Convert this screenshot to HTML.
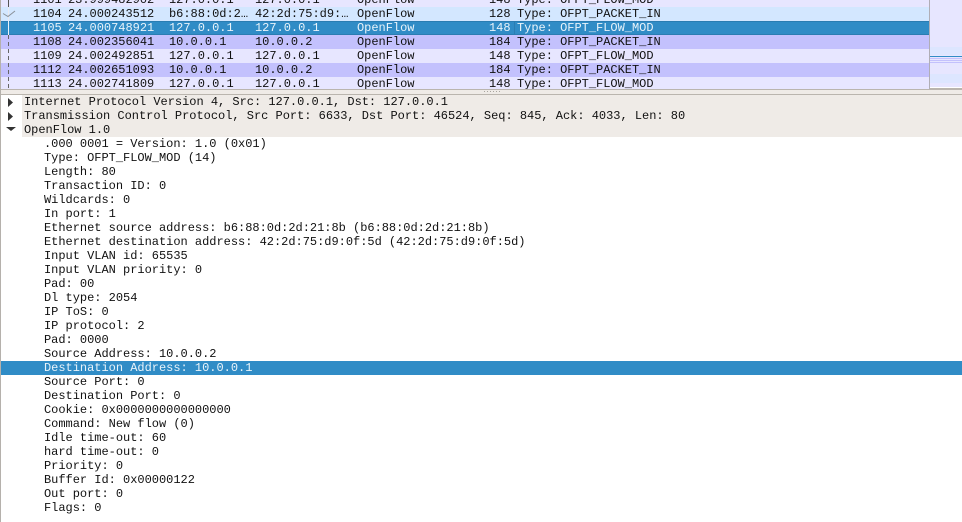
<!DOCTYPE html>
<html>
<head>
<meta charset="utf-8">
<style>
html,body{margin:0;padding:0;background:#fff;}
body{width:962px;height:522px;position:relative;overflow:hidden;font-family:"Liberation Mono",monospace;font-size:12px;line-height:14px;color:#111;letter-spacing:-0.015px;}
.a{position:absolute;}
.r{position:absolute;left:1px;width:928px;height:14px;white-space:pre;}
.r span{position:absolute;top:0;}
.c0{left:32px}.c1{left:67px}.c2{left:168px}.c3{left:254px}.c4{left:356px}.c5{left:488px}.c6{left:516px}
.t{position:absolute;left:44px;height:14px;white-space:pre;}
.h{position:absolute;left:22px;width:940px;height:14px;background:#efebe7;white-space:pre;padding-left:2px;box-sizing:border-box;}
</style>
</head>
<body>
<!-- packet list -->
<div class="r" style="top:-7px;background:#e7e6ff"><span class="c0">1101</span><span class="c1">23.999482902</span><span class="c2">127.0.0.1</span><span class="c3">127.0.0.1</span><span class="c4">OpenFlow</span><span class="c5">148</span><span class="c6">Type: OFPT_FLOW_MOD</span></div>
<div class="r" style="top:7px;background:#d3e7ff"><span class="c0">1104</span><span class="c1">24.000243512</span><span class="c2">b6:88:0d:2…</span><span class="c3">42:2d:75:d9:…</span><span class="c4">OpenFlow</span><span class="c5">128</span><span class="c6">Type: OFPT_PACKET_IN</span></div>
<div class="r" style="top:21px;background:#308cc6;color:#e8f3fa"><span class="c0">1105</span><span class="c1">24.000748921</span><span class="c2">127.0.0.1</span><span class="c3">127.0.0.1</span><span class="c4">OpenFlow</span><span class="c5">148</span><span class="c6">Type: OFPT_FLOW_MOD</span></div>
<div class="r" style="top:35px;background:#c3c1fd"><span class="c0">1108</span><span class="c1">24.002356041</span><span class="c2">10.0.0.1</span><span class="c3">10.0.0.2</span><span class="c4">OpenFlow</span><span class="c5">184</span><span class="c6">Type: OFPT_PACKET_IN</span></div>
<div class="r" style="top:49px;background:#e7e6ff"><span class="c0">1109</span><span class="c1">24.002492851</span><span class="c2">127.0.0.1</span><span class="c3">127.0.0.1</span><span class="c4">OpenFlow</span><span class="c5">148</span><span class="c6">Type: OFPT_FLOW_MOD</span></div>
<div class="r" style="top:63px;background:#c3c1fd"><span class="c0">1112</span><span class="c1">24.002651093</span><span class="c2">10.0.0.1</span><span class="c3">10.0.0.2</span><span class="c4">OpenFlow</span><span class="c5">184</span><span class="c6">Type: OFPT_PACKET_IN</span></div>
<div class="r" style="top:77px;background:#e7e6ff;height:12px;overflow:hidden"><span class="c0">1113</span><span class="c1">24.002741809</span><span class="c2">127.0.0.1</span><span class="c3">127.0.0.1</span><span class="c4">OpenFlow</span><span class="c5">148</span><span class="c6">Type: OFPT_FLOW_MOD</span></div>
<div class="a" style="left:1px;top:21px;width:928px;height:1px;background:#2a7db2"></div>
<div class="a" style="left:1px;top:34px;width:928px;height:1px;background:#2a7db2"></div>
<div class="a" style="left:514px;top:21px;width:140px;height:14px;box-sizing:border-box;border-left:1px solid #2a7db2"></div>
<!-- related packet marks -->
<div class="a" style="left:8px;top:0;width:1px;height:35px;background:#e8e8f0"></div>
<div class="a" style="left:8px;top:0;width:1px;height:7px;background:#555"></div>
<div class="a" style="left:8px;top:21px;width:1px;height:14px;background:#e8f3fa"></div>
<div class="a" style="left:8px;top:35px;width:1px;height:54px;background:repeating-linear-gradient(to bottom,#666 0 4px,transparent 4px 7px)"></div>
<svg class="a" style="left:0;top:7px" width="20" height="14"><path d="M3 6.5 L8 9.5 L15 4" fill="none" stroke="#8a9199" stroke-width="1"/></svg>
<!-- left edge -->
<div class="a" style="left:0;top:0;width:1px;height:522px;background:#b5b1ac"></div>
<!-- minimap -->
<div class="a" style="left:929px;top:0;width:1px;height:89px;background:#b0aeb6"></div>
<div class="a" style="left:930px;top:0;width:32px;height:87px;background:#e7e6ff"></div>
<div class="a" style="left:930px;top:47px;width:32px;height:8px;background:#dde6ff"></div>
<div class="a" style="left:930px;top:56px;width:32px;height:1px;background:#308cc6"></div>
<div class="a" style="left:930px;top:57px;width:32px;height:7px;background:repeating-linear-gradient(to bottom,#e7e6ff 0 1px,#c3c1fd 1px 2px)"></div>
<div class="a" style="left:930px;top:74px;width:32px;height:9px;background:#dde6ff"></div>
<div class="a" style="left:930px;top:87px;width:32px;height:1px;background:#fff"></div>
<!-- splitter -->
<div class="a" style="left:0;top:89px;width:962px;height:1px;background:#bab5ae"></div>
<div class="a" style="left:930px;top:88px;width:32px;height:2px;background:#bab5ae"></div>
<div class="a" style="left:0;top:90px;width:962px;height:4px;background:#efebe7"></div>
<div class="a" style="left:0;top:94px;width:962px;height:1px;background:#bab5ae"></div>
<div class="a" style="left:484px;top:91px;width:16px;height:1px;background:repeating-linear-gradient(to right,#a8a49e 0 1px,transparent 1px 3px)"></div>
<div class="a" style="left:0;top:0;width:1px;height:522px;background:#b5b1ac"></div>
<!-- tree headers -->
<div class="h" style="top:95px">Internet Protocol Version 4, Src: 127.0.0.1, Dst: 127.0.0.1</div>
<div class="h" style="top:109px">Transmission Control Protocol, Src Port: 6633, Dst Port: 46524, Seq: 845, Ack: 4033, Len: 80</div>
<div class="h" style="top:123px">OpenFlow 1.0</div>
<svg class="a" style="left:0;top:95px" width="22" height="42">
<path d="M8 3 L13 7.5 L8 12 Z" fill="#333"/>
<path d="M8 17 L13 21.5 L8 26 Z" fill="#333"/>
<path d="M6 32 L16 32 L11 36 Z" fill="#333"/>
</svg>
<!-- tree rows -->
<div class="a" style="left:1px;top:361px;width:961px;height:14px;background:#308cc6"></div>
<div class="t" style="top:137px">.000 0001 = Version: 1.0 (0x01)</div>
<div class="t" style="top:151px">Type: OFPT_FLOW_MOD (14)</div>
<div class="t" style="top:165px">Length: 80</div>
<div class="t" style="top:179px">Transaction ID: 0</div>
<div class="t" style="top:193px">Wildcards: 0</div>
<div class="t" style="top:207px">In port: 1</div>
<div class="t" style="top:221px">Ethernet source address: b6:88:0d:2d:21:8b (b6:88:0d:2d:21:8b)</div>
<div class="t" style="top:235px">Ethernet destination address: 42:2d:75:d9:0f:5d (42:2d:75:d9:0f:5d)</div>
<div class="t" style="top:249px">Input VLAN id: 65535</div>
<div class="t" style="top:263px">Input VLAN priority: 0</div>
<div class="t" style="top:277px">Pad: 00</div>
<div class="t" style="top:291px">Dl type: 2054</div>
<div class="t" style="top:305px">IP ToS: 0</div>
<div class="t" style="top:319px">IP protocol: 2</div>
<div class="t" style="top:333px">Pad: 0000</div>
<div class="t" style="top:347px">Source Address: 10.0.0.2</div>
<div class="t" style="top:361px;color:#e8f3fa">Destination Address: 10.0.0.1</div>
<div class="t" style="top:375px">Source Port: 0</div>
<div class="t" style="top:389px">Destination Port: 0</div>
<div class="t" style="top:403px">Cookie: 0x0000000000000000</div>
<div class="t" style="top:417px">Command: New flow (0)</div>
<div class="t" style="top:431px">Idle time-out: 60</div>
<div class="t" style="top:445px">hard time-out: 0</div>
<div class="t" style="top:459px">Priority: 0</div>
<div class="t" style="top:473px">Buffer Id: 0x00000122</div>
<div class="t" style="top:487px">Out port: 0</div>
<div class="t" style="top:501px">Flags: 0</div>
</body>
</html>
